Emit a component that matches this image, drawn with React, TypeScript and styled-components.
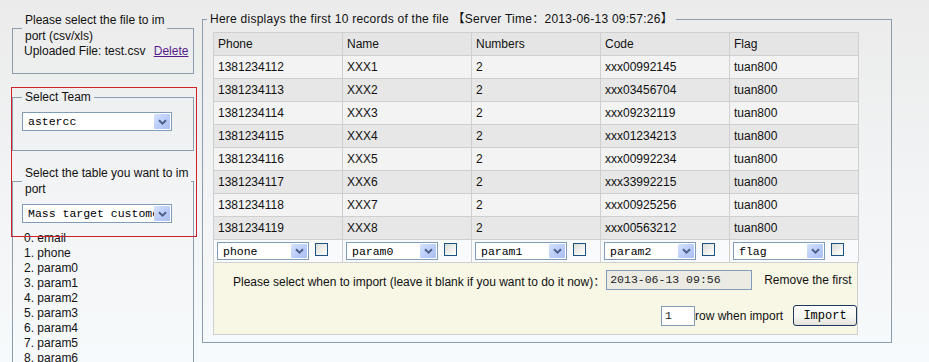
import React from "react";
import styled, { createGlobalStyle } from "styled-components";

const GlobalStyle = createGlobalStyle`
  html, body { margin: 0; padding: 0; }
  body {
    width: 929px;
    height: 362px;
    overflow: hidden;
    background: linear-gradient(to bottom, #ebebeb 0%, #f2f4f5 55%, #f7fafc 100%);
    font-family: "Liberation Sans", Arial, "Noto Sans CJK SC", sans-serif;
    font-size: 12px;
    color: #111;
  }
`;

const Page = styled.div`
  display: flex;
  align-items: flex-start;
  gap: 8px;
  padding: 11px 0 0 12px;
`;

const LeftColumn = styled.div`
  position: relative;
  width: 182px;
  margin-top: 1px;
  display: flex;
  flex-direction: column;
`;

const Box = styled.fieldset<{ $mt?: number; $pb?: number }>`
  margin: ${(p) => p.$mt ?? 0}px 0 0 0;
  border: 1px solid #8b9dae;
  padding: 0 9px ${(p) => p.$pb ?? 0}px 9px;
  min-width: 0;
`;

const Legend = styled.legend`
  padding: 0 3px;
  line-height: 16px;
  white-space: nowrap;
`;

const Line = styled.div`
  line-height: 15px;
  padding-left: 2px;
  white-space: nowrap;
`;

const LinkText = styled.a`
  color: #551a8b;
  text-decoration: underline;
  margin-left: 5px;
  cursor: pointer;
`;

const SelectWrap = styled.div<{ $w: number; $h: number; $mt?: number; $ml?: number }>`
  box-sizing: border-box;
  width: ${(p) => p.$w}px;
  height: ${(p) => p.$h}px;
  margin: ${(p) => p.$mt ?? 0}px 0 0 ${(p) => p.$ml ?? 0}px;
  border: 1px solid #7f9db9;
  background: #fff;
  display: flex;
  align-items: stretch;
  padding: 1px;
  flex-shrink: 0;
`;

const SelectText = styled.span`
  flex: 1;
  overflow: hidden;
  white-space: nowrap;
  font-family: "Liberation Mono", "Courier New", monospace;
  font-size: 11.5px;
  line-height: 15px;
  padding-left: 4px;
  color: #000;
  display: flex;
  align-items: center;
`;

const SelectArrow = styled.span`
  width: 16px;
  flex-shrink: 0;
  background: linear-gradient(135deg, #d6e2fc 0%, #bccefa 50%, #a9bef3 100%);
  border-radius: 1px;
  display: flex;
  align-items: center;
  justify-content: center;
`;

const Select: React.FC<{ value: string; w: number; h: number; mt?: number; ml?: number }> = ({
  value,
  w,
  h,
  mt,
  ml,
}) => (
  <SelectWrap $w={w} $h={h} $mt={mt} $ml={ml}>
    <SelectText>{value}</SelectText>
    <SelectArrow>
      <svg width="9" height="6" viewBox="0 0 9 6">
        <path d="M1 1.2 L4.5 4.6 L8 1.2" fill="none" stroke="#4d6185" strokeWidth="2" />
      </svg>
    </SelectArrow>
  </SelectWrap>
);

const ListBlock = styled.div`
  margin-top: 8px;
`;

const RedMark = styled.div`
  position: absolute;
  left: -1px;
  top: 75px;
  width: 186px;
  height: 150px;
  box-sizing: border-box;
  border: 1px solid #cc2127;
  pointer-events: none;
`;

const RightBox = styled.fieldset`
  margin: 0;
  width: 690px;
  box-sizing: border-box;
  border: 1px solid #8b9dae;
  padding: 5px 0 7px 4px;
  min-width: 0;
`;

const RightLegend = styled.legend`
  padding: 0 3px;
  line-height: 16px;
  letter-spacing: 0.25px;
  white-space: nowrap;
`;

const Inner = styled.div`
  margin-left: 6px;
  width: 645px;
`;

const Table = styled.table`
  width: 645px;
  border-collapse: collapse;
  table-layout: fixed;
`;

const Row = styled.tr<{ $bg: string }>`
  height: 23px;
  background: ${(p) => p.$bg};
`;

const Cell = styled.td`
  border: 1px solid #cfcfcf;
  padding: 0 0 0 4px;
  line-height: 15px;
  white-space: nowrap;
  overflow: hidden;
`;

const HeadCell = styled.th`
  border: 1px solid #cfcfcf;
  padding: 0 0 0 4px;
  font-weight: normal;
  text-align: left;
  line-height: 15px;
`;

const MapCell = styled.td`
  border: 1px solid #cfcfcf;
  padding: 0 0 0 3px;
  height: 22px;
`;

const MapInner = styled.div`
  display: flex;
  align-items: center;
  gap: 6px;
`;

const Check = styled.span`
  width: 13px;
  height: 13px;
  box-sizing: border-box;
  border: 1px solid #1c5180;
  background: linear-gradient(135deg, #dcdcd7 0%, #f5f5f2 70%, #ffffff 100%);
  margin-top: -3px;
`;

const ImportPanel = styled.div`
  box-sizing: border-box;
  width: 645px;
  height: 72px;
  border: 1px solid #cfcfcf;
  border-top: 0;
  background: #f8f7e6;
  overflow: hidden;
  padding: 7px 0 0 19px;
`;

const PanelRow = styled.div<{ $end?: boolean; $mt?: number }>`
  display: flex;
  align-items: center;
  white-space: nowrap;
  justify-content: ${(p) => (p.$end ? "flex-end" : "flex-start")};
  margin-top: ${(p) => p.$mt ?? 0}px;
`;

const TextInput = styled.div<{ $w: number; $bg: string }>`
  box-sizing: border-box;
  width: ${(p) => p.$w}px;
  height: 20px;
  flex-shrink: 0;
  border: 1px solid #7f9db9;
  background: ${(p) => p.$bg};
  font-family: "Liberation Mono", "Courier New", monospace;
  font-size: 11.5px;
  line-height: 18px;
  padding-left: 3px;
  color: #222;
`;

const Gap = styled.span<{ $w: number }>`
  display: inline-block;
  width: ${(p) => p.$w}px;
  flex-shrink: 0;
`;

const Button = styled.button`
  box-sizing: border-box;
  width: 64px;
  height: 21px;
  margin-left: 10px;
  padding: 0;
  border: 1px solid #1c3a5c;
  border-radius: 3px;
  background: linear-gradient(to bottom, #ffffff 0%, #f4f4f0 60%, #e3e2da 100%);
  font-family: "Liberation Mono", "Courier New", monospace;
  font-size: 12px;
  color: #000;
`;

const rows = [
  ["1381234112", "XXX1", "2", "xxx00992145", "tuan800"],
  ["1381234113", "XXX2", "2", "xxx03456704", "tuan800"],
  ["1381234114", "XXX3", "2", "xxx09232119", "tuan800"],
  ["1381234115", "XXX4", "2", "xxx01234213", "tuan800"],
  ["1381234116", "XXX5", "2", "xxx00992234", "tuan800"],
  ["1381234117", "XXX6", "2", "xxx33992215", "tuan800"],
  ["1381234118", "XXX7", "2", "xxx00925256", "tuan800"],
  ["1381234119", "XXX8", "2", "xxx00563212", "tuan800"],
];

const headers = ["Phone", "Name", "Numbers", "Code", "Flag"];
const mapping = ["phone", "param0", "param1", "param2", "flag"];
const fields = ["email", "phone", "param0", "param1", "param2", "param3", "param4", "param5", "param6"];

export default function App() {
  return (
    <>
      <GlobalStyle />
      <Page>
        <LeftColumn>
          <Box $pb={14}>
            <Legend>
              Please select the file to im
              <br />
              port (csv/xls)
            </Legend>
            <Line>
              Uploaded File: test.csv <LinkText>Delete</LinkText>
            </Line>
          </Box>
          <Box $mt={15} $pb={19}>
            <Legend>Select Team</Legend>
            <Select value="astercc" w={150} h={19} mt={7} />
          </Box>
          <Box $mt={14} $pb={0}>
            <Legend>
              Select the table you want to im
              <br />
              port
            </Legend>
            <Select value="Mass target customer" w={150} h={19} mt={7} />
            <ListBlock>
              {fields.map((f, i) => (
                <Line key={f}>
                  {i}. {f}
                </Line>
              ))}
            </ListBlock>
          </Box>
          <RedMark />
        </LeftColumn>
        <RightBox>
          <RightLegend>
            Here displays the first 10 records of the file 【Server Time：2013-06-13 09:57:26】
          </RightLegend>
          <Inner>
            <Table>
              <colgroup>
                {headers.map((h) => (
                  <col key={h} style={{ width: 129 }} />
                ))}
              </colgroup>
              <thead>
                <Row $bg="#e5e5e5">
                  {headers.map((h) => (
                    <HeadCell key={h}>{h}</HeadCell>
                  ))}
                </Row>
              </thead>
              <tbody>
                {rows.map((r, i) => (
                  <Row key={r[0]} $bg={i % 2 === 0 ? "#f3f3f3" : "#e7e7e7"}>
                    {r.map((c, j) => (
                      <Cell key={j}>{c}</Cell>
                    ))}
                  </Row>
                ))}
                <Row $bg="#f8fafb">
                  {mapping.map((m) => (
                    <MapCell key={m}>
                      <MapInner>
                        <Select value={m} w={92} h={18} />
                        <Check />
                      </MapInner>
                    </MapCell>
                  ))}
                </Row>
              </tbody>
            </Table>
            <ImportPanel>
              <PanelRow>
                <span>Please select when to import (leave it blank if you want to do it now)：</span>
                <Gap $w={1} />
                <TextInput $w={146} $bg="#ebebe4">
                  2013-06-13 09:56
                </TextInput>
                <Gap $w={12} />
                <span>Remove the first</span>
              </PanelRow>
              <PanelRow $end $mt={15}>
                <TextInput $w={34} $bg="#ffffff">
                  1
                </TextInput>
                <span>row when import</span>
                <Button>Import</Button>
              </PanelRow>
            </ImportPanel>
          </Inner>
        </RightBox>
      </Page>
    </>
  );
}
